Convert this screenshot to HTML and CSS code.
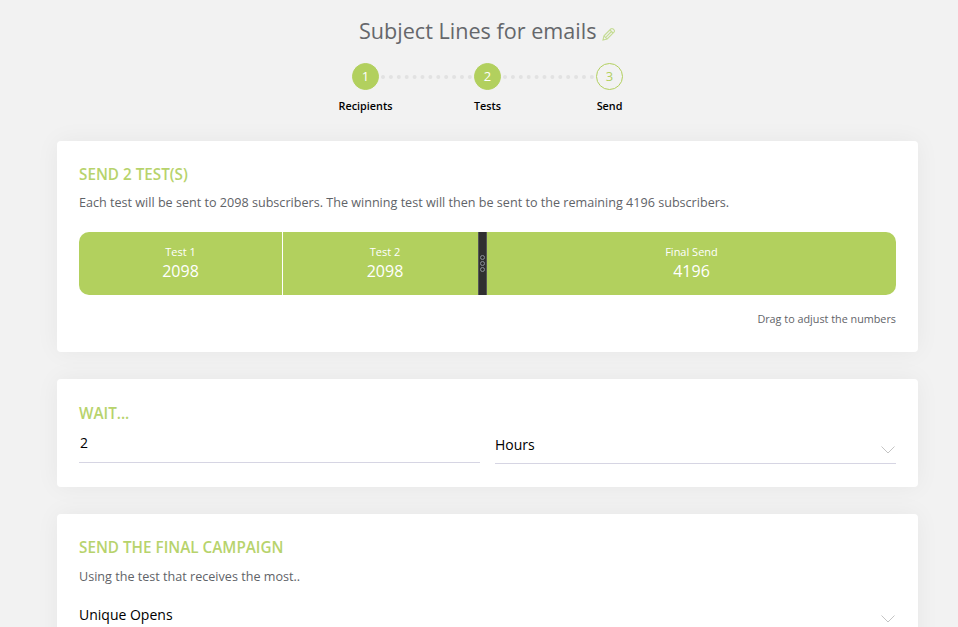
FILE: index.html
```html
<!DOCTYPE html>
<html lang="en">
<head>
    <meta charset="UTF-8">
    <meta name="viewport" content="width=device-width, initial-scale=1.0">
    <title>Subject Lines for emails</title>
    <link rel="stylesheet" href="styles.css">
</head>
<body>
    <div class="page">
        <h1 class="page-title">Subject Lines for emails
            <svg class="edit-icon" viewBox="0 0 14 14" width="14" height="14" fill="none" stroke="#c5dc94" stroke-width="1.1">
                <path d="M1 13l1-4.2 6.8-6.8a1.6 1.6 0 0 1 2.3 0l.9.9a1.6 1.6 0 0 1 0 2.3L5.2 12z"/>
                <path d="M2 8.8L5.2 12M8 3l3 3M4.2 9.8L9.5 4.5"/>
            </svg>
        </h1>

        <div class="stepper">
            <div class="step-row">
                <span class="step-dot done">1</span>
                <span class="step-line"></span>
                <span class="step-dot done">2</span>
                <span class="step-line"></span>
                <span class="step-dot">3</span>
            </div>
            <div class="step-labels">
                <span>Recipients</span>
                <span>Tests</span>
                <span>Send</span>
            </div>
        </div>

        <section class="card card-tests">
            <h2>SEND 2 TEST(S)</h2>
            <p class="card-text">Each test will be sent to 2098 subscribers. The winning test will then be sent to the remaining 4196 subscribers.</p>
            <div class="split-bar">
                <div class="split-part part-one">
                    <span class="part-name">Test 1</span>
                    <span class="part-count">2098</span>
                </div>
                <div class="split-part part-two">
                    <span class="part-name">Test 2</span>
                    <span class="part-count">2098</span>
                    <span class="split-handle"><i></i><i></i><i></i></span>
                </div>
                <div class="split-part part-final">
                    <span class="part-name">Final Send</span>
                    <span class="part-count">4196</span>
                </div>
            </div>
            <p class="split-hint">Drag to adjust the numbers</p>
        </section>

        <section class="card card-wait">
            <h2>WAIT...</h2>
            <div class="wait-fields">
                <div class="field field-input">2</div>
                <div class="field field-select">Hours
                    <svg class="chevron" viewBox="0 0 14 8" width="14" height="8" fill="none" stroke="#c4c4c4"><path d="M.5 .5L7 7l6.5-6.5"/></svg>
                </div>
            </div>
        </section>

        <section class="card card-final">
            <h2>SEND THE FINAL CAMPAIGN</h2>
            <p class="card-text">Using the test that receives the most..</p>
            <div class="field field-select field-metric">Unique Opens
                <svg class="chevron" viewBox="0 0 14 8" width="14" height="8" fill="none" stroke="#c4c4c4"><path d="M.5 .5L7 7l6.5-6.5"/></svg>
            </div>
        </section>
    </div>
</body>
</html>
```

FILE: styles.css
```css
:root {
    --green: #b2d05e;
    --heading-green: #b7d36c;
    --text-grey: #5f6368;
    --field-line: #d6d5e3;
}
* {
    margin: 0;
    padding: 0;
    box-sizing: border-box;
}
html, body {
    height: 627px;
    overflow: hidden;
}
body {
    font-family: "Open Sans", sans-serif;
    background-color: #f2f2f2;
    color: #000;
}
.page {
    margin: 0 40px 0 57px;
    padding-top: 16px;
}
.page-title {
    font-size: 21.6px;
    line-height: 30px;
    font-weight: 400;
    color: #65676b;
    text-align: center;
}
.edit-icon {
    vertical-align: -2px;
    margin-left: 0;
}

.stepper {
    width: 366px;
    margin: 17px auto 0;
}
.step-row {
    display: flex;
    align-items: center;
    padding: 0 47.5px;
}
.step-dot {
    flex: none;
    width: 27px;
    height: 27px;
    border-radius: 50%;
    border: 1px solid var(--green);
    color: var(--green);
    font-size: 13px;
    line-height: 25px;
    text-align: center;
}
.step-dot.done {
    background-color: var(--green);
    color: #fff;
}
.step-line {
    flex: 1;
    margin: 1px 2px 0;
    border-top: 4px dotted #e2e2e2;
}
.step-labels {
    display: grid;
    grid-template-columns: repeat(3, 122px);
    margin-top: 8px;
    font-size: 10.8px;
    line-height: 15px;
    font-weight: 600;
    text-align: center;
}

.card {
    background-color: #fff;
    border-radius: 4px;
    padding: 23px 22px 22px;
    box-shadow: 0 0 24px rgba(0, 0, 0, 0.05);
}
.card h2 {
    font-size: 15.25px;
    line-height: 20px;
    font-weight: 600;
    color: var(--heading-green);
}
.card-text {
    font-size: 12.6px;
    line-height: 18px;
    color: var(--text-grey);
}
.card-tests {
    margin-top: 28px;
    height: 211px;
}
.card-tests .card-text {
    margin-top: 10px;
}
.split-bar {
    display: flex;
    height: 63px;
    margin-top: 20px;
    border-radius: 10px;
    background-color: var(--green);
    color: #fff;
    text-align: center;
}
.split-part {
    display: flex;
    flex-direction: column;
    align-items: center;
    padding-top: 12px;
}
.part-one {
    width: 204px;
    border-right: 1px solid #fff;
}
.part-two {
    width: 204px;
    position: relative;
}
.part-final {
    flex: 1;
}
.part-name {
    font-size: 11px;
    line-height: 16px;
}
.part-count {
    font-size: 16px;
    line-height: 22px;
}
.split-handle {
    position: absolute;
    top: 0;
    right: 0;
    width: 9px;
    height: 63px;
    display: flex;
    flex-direction: column;
    align-items: center;
    justify-content: center;
    gap: 1px;
    background-color: #303030;
    border-left: 1px solid #555;
    border-right: 1px solid #555;
}
.split-handle i {
    width: 5px;
    height: 5px;
    border: 1px solid #8a8f96;
    border-radius: 50%;
}
.split-hint {
    margin-top: 16px;
    font-size: 10.8px;
    line-height: 16px;
    color: var(--text-grey);
    text-align: right;
}

.card-wait {
    margin-top: 27px;
    height: 108px;
}
.card-wait h2 {
    margin-top: 1px;
}
.wait-fields {
    display: grid;
    grid-template-columns: 401px 401px;
    column-gap: 15px;
    margin-top: 2px;
}
.field {
    font-size: 14px;
    line-height: 20px;
}
.field-input {
    height: 38px;
    padding: 8px 0 0 1px;
    border-bottom: 1px solid var(--field-line);
}
.field-select {
    position: relative;
    height: 39px;
    padding-top: 10px;
    border-bottom: 1px solid var(--field-line);
}
.chevron {
    position: absolute;
    right: 1px;
    top: 21px;
}

.card-final {
    margin-top: 27px;
    height: 160px;
}
.card-final .card-text {
    margin-top: 11px;
}
.field-metric {
    margin-top: 15px;
    height: 40px;
    padding-top: 4px;
}
.field-metric .chevron {
    top: 14px;
}
```
